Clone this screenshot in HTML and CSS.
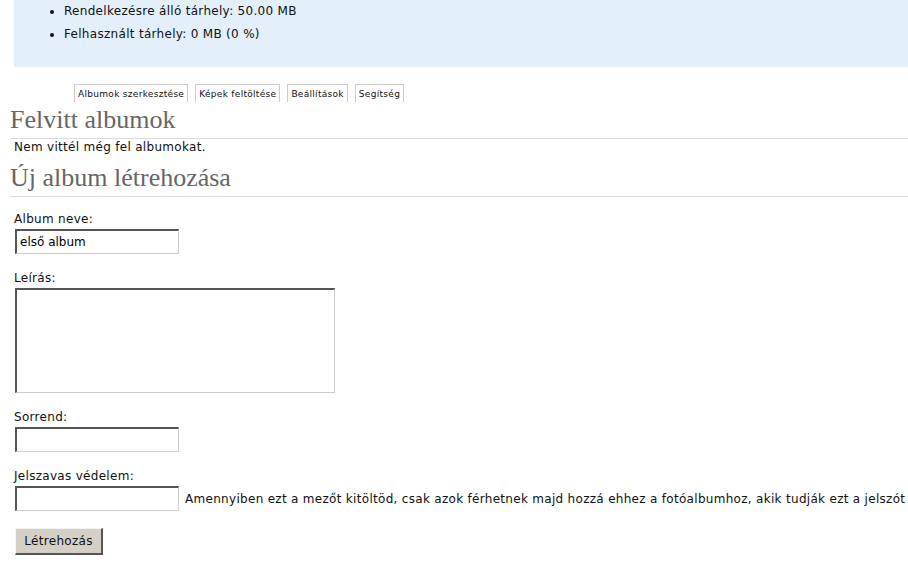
FILE: index.html
```html
<html>
  <head>
    <meta charset="utf-8">
    <link rel="stylesheet" href="styles.css">
  </head>
  <body>
    <div class="quota">
      <ul>
        <li>Rendelkezésre álló tárhely: 50.00 MB</li>
        <li>Felhasznált tárhely: 0 MB (0 %)</li>
      </ul>
    </div>

    <div class="tabs">
      <a href="#">Albumok szerkesztése</a>
      <a href="#">Képek feltöltése</a>
      <a href="#">Beállítások</a>
      <a href="#">Segítség</a>
    </div>

    <h2>Felvitt albumok</h2>
    <p class="empty">Nem vittél még fel albumokat.</p>

    <h2>Új album létrehozása</h2>
    <form class="album-form">
      <div class="field">
        <label for="albumName">Album neve:</label>
        <input type="text" id="albumName" value="első album">
      </div>
      <div class="field">
        <label for="albumDesc">Leírás:</label>
        <textarea id="albumDesc"></textarea>
      </div>
      <div class="field">
        <label for="albumOrder">Sorrend:</label>
        <input type="text" id="albumOrder">
      </div>
      <div class="field">
        <label for="albumPass">Jelszavas védelem:</label>
        <div class="row">
          <input type="text" id="albumPass">
          <span class="hint">Amennyiben ezt a mezőt kitöltöd, csak azok férhetnek majd hozzá ehhez a fotóalbumhoz, akik tudják ezt a jelszót</span>
        </div>
      </div>
      <button type="submit" class="btn">Létrehozás</button>
    </form>
  </body>
</html>
```

FILE: styles.css
```css
body {
  font-family: "DejaVu Sans", Verdana, sans-serif;
  font-size: 12px;
  letter-spacing: 0.3px;
  color: #111;
  background-color: #fff;
  margin: 0;
  overflow: hidden;
}
.quota {
  margin-left: 14px;
  height: 67px;
  background-color: #e3f0fb;
}
.quota ul {
  margin: 0;
  padding: 0 0 0 50px;
}
.quota li {
  line-height: 23px;
}
.tabs {
  margin: 17px 0 0 74px;
  height: 18px;
  display: flex;
  gap: 7px;
}
.tabs a {
  font-size: 9px;
  color: #111;
  text-decoration: none;
  line-height: 18px;
  padding: 0 3px;
  border: 1px solid #ccc;
  border-bottom: none;
}
h2 {
  font-family: "Liberation Serif", "Times New Roman", serif;
  font-weight: normal;
  font-size: 26px;
  letter-spacing: 0;
  color: #666;
  line-height: 36px;
  margin: 0 0 0 10px;
  border-bottom: 1px solid #ddd;
}
.empty {
  margin: 0 0 5px 14px;
  line-height: 16px;
}
.album-form {
  padding: 14px 0 0 14px;
}
.field {
  margin-bottom: 16px;
}
.field label {
  display: block;
  line-height: 16px;
  margin-bottom: 2px;
}
.field input,
.field textarea {
  display: block;
  box-sizing: border-box;
  margin: 0 0 0 1px;
  border-style: solid;
  border-width: 2px 1px 1px 2px;
  border-color: #555 #ccc #ccc #555;
  font-family: "DejaVu Sans", Verdana, sans-serif;
  font-size: 12px;
  color: #000;
  padding: 0 3px;
}
.field input {
  width: 164px;
  height: 25px;
}
.field textarea {
  width: 320px;
  height: 105px;
  resize: none;
}
.row {
  display: flex;
  align-items: center;
  gap: 6px;
  white-space: nowrap;
}
.btn {
  margin: 1px 0 0 1px;
  width: 88px;
  height: 27px;
  background-color: #d4d0c8;
  border-style: solid;
  border-width: 1px 2px 2px 1px;
  border-color: #f4f4f4 #555 #555 #f4f4f4;
  font-family: "DejaVu Sans", Verdana, sans-serif;
  font-size: 12px;
  letter-spacing: 0.3px;
  color: #111;
  padding: 0;
}
```
